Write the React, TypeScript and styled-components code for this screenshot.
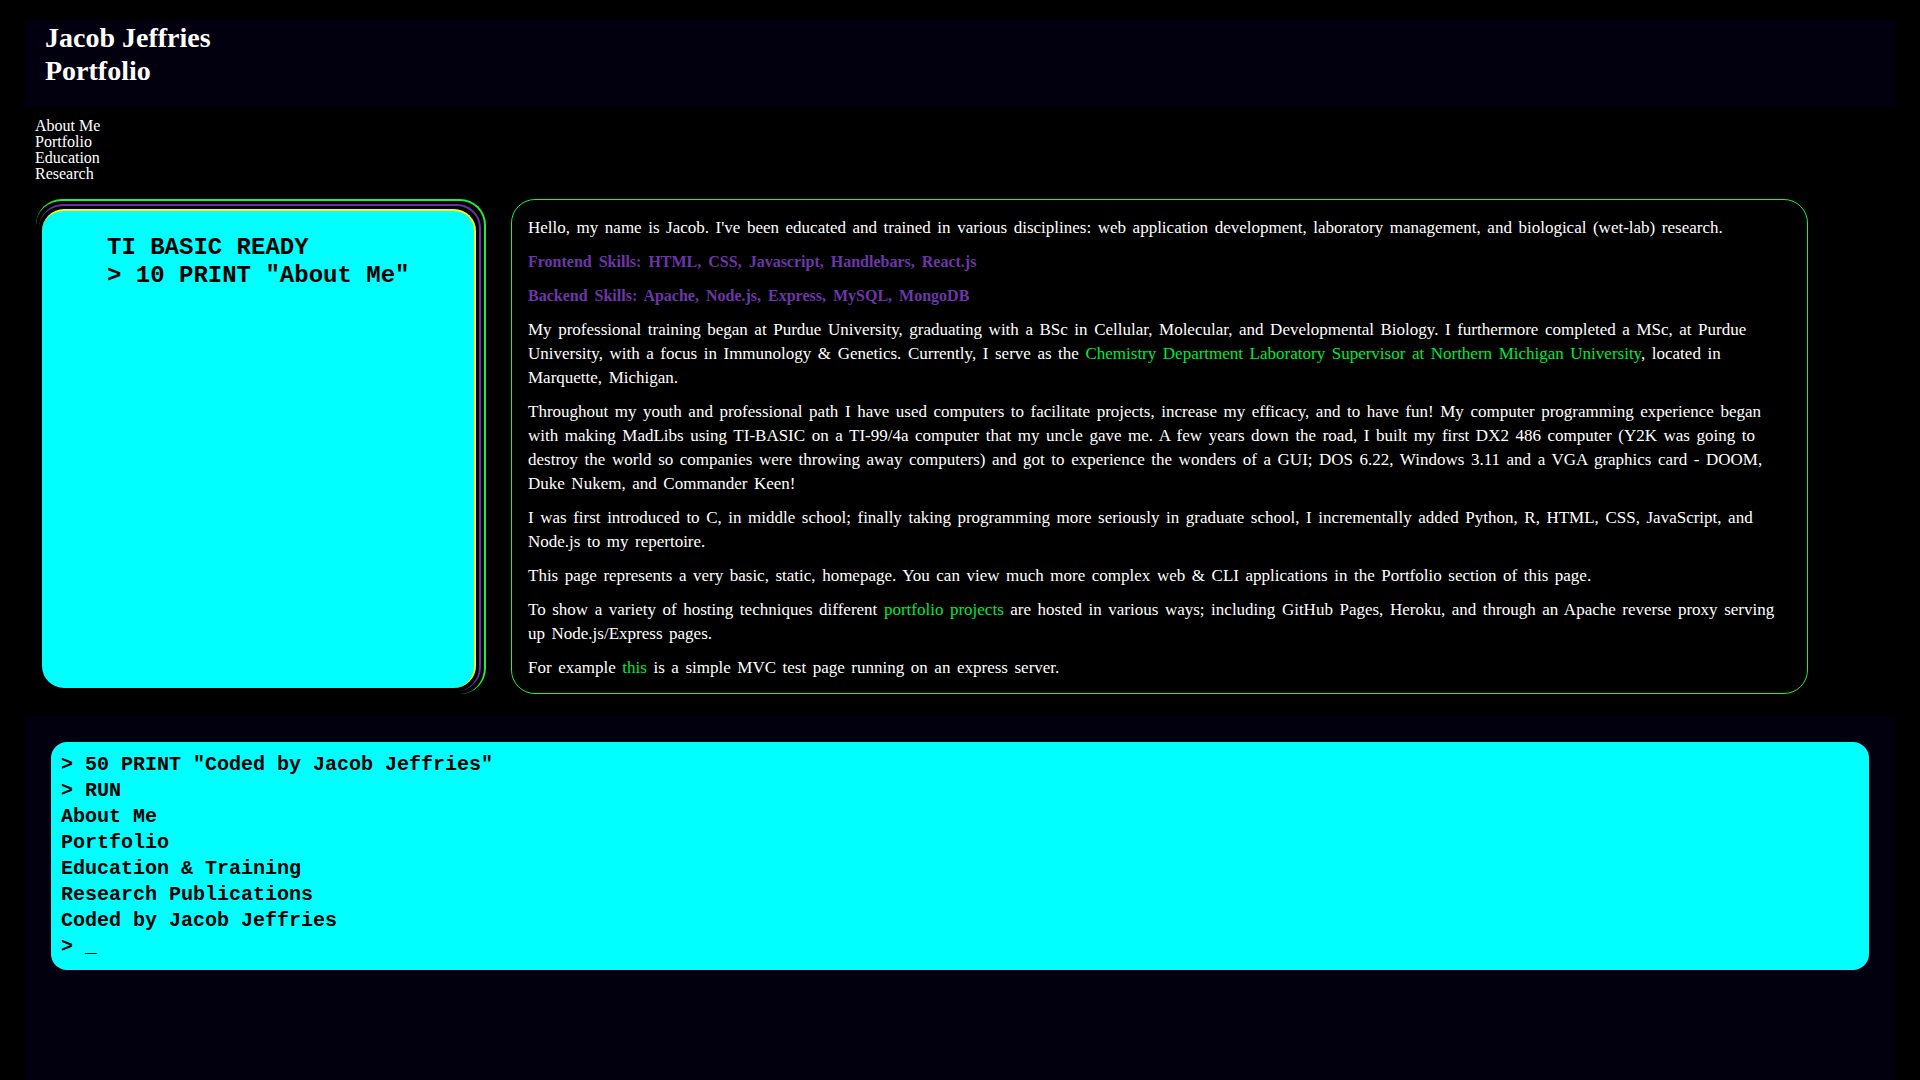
import styled, { createGlobalStyle } from "styled-components";

const GlobalStyle = createGlobalStyle`
  html {
    background: #000;
  }
  body {
    margin: 20px 25px 0;
    background: #000;
    color: #fff;
    font-family: "Liberation Serif", "Times New Roman", serif;
  }
`;

const COLORS = {
  navy: "#02000f",
  cyan: "#00ffff",
  yellow: "#ffff00",
  purple: "#6b2fa0",
  green: "#1fee3c",
  link: "#00e83a",
  skill: "#6d36a8",
};

const Header = styled.header`
  box-sizing: border-box;
  height: 87px;
  padding: 1px 20px 0;
  background: ${COLORS.navy};
`;

const Title = styled.h1`
  margin: 0;
  font-size: 28px;
  line-height: 33px;
  font-weight: bold;
  color: #fff;
`;

const Nav = styled.nav`
  display: flex;
  flex-direction: column;
  margin: 11px 0 0 10px;
`;

const NavLink = styled.a`
  color: #fff;
  text-decoration: none;
  font-size: 16px;
  line-height: 16px;
`;

const Row = styled.main`
  display: flex;
  align-items: stretch;
  gap: 25px;
  margin: 17px 0 0 11px;
`;

const GreenFrame = styled.div`
  box-sizing: border-box;
  display: flex;
  width: 450px;
  padding: 3px;
  border-top: 2px solid ${COLORS.green};
  border-right: 2px solid ${COLORS.green};
  border-radius: 26px;
`;

const PurpleFrame = styled.div`
  display: flex;
  flex: 1;
  padding: 3px;
  border-top: 2px solid ${COLORS.purple};
  border-right: 2px solid ${COLORS.purple};
  border-radius: 24px;
`;

const Screen = styled.div`
  flex: 1;
  padding: 23px 20px 20px 65px;
  background: ${COLORS.cyan};
  border-top: 2px solid ${COLORS.yellow};
  border-right: 2px solid ${COLORS.yellow};
  border-radius: 22px;
  color: #000;
  font-family: "Liberation Mono", "Courier New", monospace;
  font-weight: bold;
  font-size: 24px;
  line-height: 28px;
  white-space: pre;
`;

const AboutCard = styled.section`
  box-sizing: border-box;
  width: 1297px;
  padding: 16px 16px 13px;
  border: 1px solid ${COLORS.green};
  border-radius: 24px;
  display: flex;
  flex-direction: column;
  gap: 10px;
`;

const Para = styled.p<{ $skill?: boolean }>`
  margin: 0;
  font-size: ${(p) => (p.$skill ? "16px" : "17px")};
  line-height: 24px;
  word-spacing: ${(p) => (p.$skill ? "3px" : "2.3px")};
  color: ${(p) => (p.$skill ? COLORS.skill : "#fff")};
  font-weight: ${(p) => (p.$skill ? "bold" : "normal")};
`;

const Link = styled.a`
  color: ${COLORS.link};
  text-decoration: none;
`;

const Footer = styled.footer`
  box-sizing: border-box;
  height: 387px;
  margin-top: 22px;
  padding: 26px;
  background: ${COLORS.navy};
`;

const Terminal = styled.div`
  padding: 10px;
  background: ${COLORS.cyan};
  border-radius: 16px;
  color: #000;
  font-family: "Liberation Mono", "Courier New", monospace;
  font-weight: bold;
  font-size: 20px;
  line-height: 26px;
  white-space: pre;
`;

const navItems = ["About Me", "Portfolio", "Education", "Research"];

const terminalLines = [
  '> 50 PRINT "Coded by Jacob Jeffries"',
  "> RUN",
  "About Me",
  "Portfolio",
  "Education & Training",
  "Research Publications",
  "Coded by Jacob Jeffries",
  "> _",
];

export default function App() {
  return (
    <>
      <GlobalStyle />
      <Header>
        <Title>
          Jacob Jeffries
          <br />
          Portfolio
        </Title>
      </Header>
      <Nav>
        {navItems.map((item) => (
          <NavLink key={item} href="#">
            {item}
          </NavLink>
        ))}
      </Nav>
      <Row>
        <GreenFrame>
          <PurpleFrame>
            <Screen>{'TI BASIC READY\n> 10 PRINT "About Me"'}</Screen>
          </PurpleFrame>
        </GreenFrame>
        <AboutCard>
          <Para>
            Hello, my name is Jacob. I've been educated and trained in various
            disciplines: web application development, laboratory management, and
            biological (wet-lab) research.
          </Para>
          <Para $skill>
            Frontend Skills: HTML, CSS, Javascript, Handlebars, React.js
          </Para>
          <Para $skill>
            Backend Skills: Apache, Node.js, Express, MySQL, MongoDB
          </Para>
          <Para>
            My professional training began at Purdue University, graduating with
            a BSc in Cellular, Molecular, and Developmental Biology. I
            furthermore completed a MSc, at Purdue University, with a focus in
            Immunology &amp; Genetics. Currently, I serve as the{" "}
            <Link href="#">
              Chemistry Department Laboratory Supervisor at Northern Michigan
              University
            </Link>
            , located in Marquette, Michigan.
          </Para>
          <Para>
            Throughout my youth and professional path I have used computers to
            facilitate projects, increase my efficacy, and to have fun! My
            computer programming experience began with making MadLibs using
            TI-BASIC on a TI-99/4a computer that my uncle gave me. A few years
            down the road, I built my first DX2 486 computer (Y2K was going to
            destroy the world so companies were throwing away computers) and got
            to experience the wonders of a GUI; DOS 6.22, Windows 3.11 and a VGA
            graphics card - DOOM, Duke Nukem, and Commander Keen!
          </Para>
          <Para>
            I was first introduced to C, in middle school; finally taking
            programming more seriously in graduate school, I incrementally added
            Python, R, HTML, CSS, JavaScript, and Node.js to my repertoire.
          </Para>
          <Para>
            This page represents a very basic, static, homepage. You can view
            much more complex web &amp; CLI applications in the Portfolio section
            of this page.
          </Para>
          <Para>
            To show a variety of hosting techniques different{" "}
            <Link href="#">portfolio projects</Link> are hosted in various ways;
            including GitHub Pages, Heroku, and through an Apache reverse proxy
            serving up Node.js/Express pages.
          </Para>
          <Para>
            For example <Link href="#">this</Link> is a simple MVC test page
            running on an express server.
          </Para>
        </AboutCard>
      </Row>
      <Footer>
        <Terminal>{terminalLines.join("\n")}</Terminal>
      </Footer>
    </>
  );
}
